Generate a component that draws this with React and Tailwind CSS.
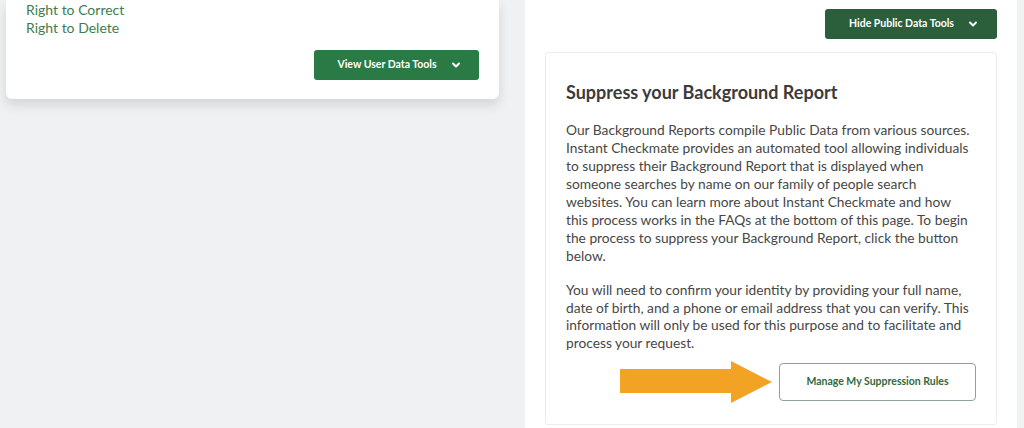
import React from "react";

const font = { fontFamily: "Lato, 'Open Sans', sans-serif" };

const intro = [
  "Our Background Reports compile Public Data from various sources.",
  "Instant Checkmate provides an automated tool allowing individuals",
  "to suppress their Background Report that is displayed when",
  "someone searches by name on our family of people search",
  "websites. You can learn more about Instant Checkmate and how",
  "this process works in the FAQs at the bottom of this page. To begin",
  "the process to suppress your Background Report, click the button",
  "below.",
];

const identity = [
  "You will need to confirm your identity by providing your full name,",
  "date of birth, and a phone or email address that you can verify. This",
  "information will only be used for this purpose and to facilitate and",
  "process your request.",
];

function Chevron() {
  return (
    <svg viewBox="0 0 12 12" className="h-3 w-3" fill="none" stroke="currentColor" strokeWidth="2" strokeLinecap="round" strokeLinejoin="round">
      <path d="M3 4.5 6 7.5 9 4.5" />
    </svg>
  );
}

function Arrow() {
  return (
    <svg viewBox="0 0 152 42" className="h-[42px] w-[152px] shrink-0">
      <polygon points="0,8 111,8 111,0 152,21 111,42 111,32 0,32" fill="#f2a324" />
    </svg>
  );
}

function Lines({ lines, className }) {
  return (
    <p className={className}>
      {lines.map((l, i) => (
        <span key={i} className="block whitespace-nowrap">{l}</span>
      ))}
    </p>
  );
}

export default function App() {
  return (
    <div className="h-[428px] w-[1024px] overflow-hidden bg-[#eff1f3] flex pl-[6px] pr-[7px] gap-[26px]" style={font}>
      {/* user data card */}
      <div className="w-[493px] self-start h-[99px] bg-white rounded-b-md shadow-[0_6px_12px_rgba(0,0,0,0.12)] pl-[20px] pr-[20px] flex flex-col">
        <div className="text-[14px] leading-[18px] text-[#3f7d4e] pt-[1px]">
          <div>Right to Correct</div>
          <div>Right to Delete</div>
        </div>
        <div className="flex justify-end mt-[13px]">
          <button className="w-[165px] h-[30px] rounded-[3px] bg-[#2a7a46] text-white text-[10.5px] font-bold flex items-center justify-center gap-[13px] pl-[6px]">
            <span>View User Data Tools</span>
            <Chevron />
          </button>
        </div>
      </div>

      {/* public data panel */}
      <div className="flex-1 bg-white px-[20px] pt-[9px] flex flex-col">
        <div className="flex justify-end">
          <button className="w-[172px] h-[30px] rounded-[3px] bg-[#2b5f3c] text-white text-[10.5px] font-bold flex items-center justify-center gap-[13px] pl-[6px]">
            <span>Hide Public Data Tools</span>
            <Chevron />
          </button>
        </div>
        <div className="mt-[13px] border border-[#ececec] rounded-[3px] px-[20px] pt-[28px] pb-[21px] text-[#474747]">
          <h2 className="text-[18px] leading-[22px] font-bold text-[#3b3b3b]">Suppress your Background Report</h2>
          <Lines lines={intro} className="mt-[18px] text-[13.75px] leading-[18px]" />
          <Lines lines={identity} className="mt-[16px] text-[13.75px] leading-[17.5px]" />
          <div className="mt-[10px] flex justify-end items-center gap-[7px]">
            <Arrow />
            <button className="w-[197px] h-[38px] rounded-[4px] border border-[#8aa596] bg-white text-[#2e6b40] text-[10.5px] font-bold">
              Manage My Suppression Rules
            </button>
          </div>
        </div>
      </div>
    </div>
  );
}
